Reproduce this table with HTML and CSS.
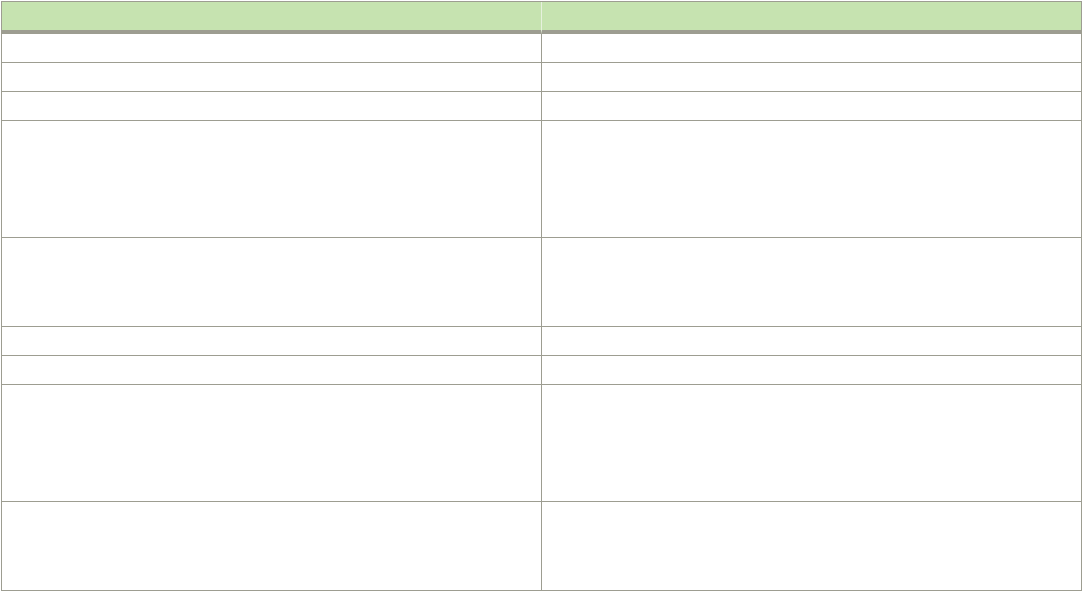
FILE: index.html
```html
<!DOCTYPE html>
<html>
<head>
<meta charset="utf-8">
<link rel="stylesheet" href="styles.css">
</head>
<body>
<div class="page">
  <div class="table">
    <div class="cell head left"></div>
    <div class="cell head"></div>
    <div class="cell left r1"></div><div class="cell r1"></div>
    <div class="cell left r1"></div><div class="cell r1"></div>
    <div class="cell left r1"></div><div class="cell r1"></div>
    <div class="cell left r4"></div><div class="cell r4"></div>
    <div class="cell left r3"></div><div class="cell r3"></div>
    <div class="cell left r1"></div><div class="cell r1"></div>
    <div class="cell left r1"></div><div class="cell r1"></div>
    <div class="cell left r4"></div><div class="cell r4"></div>
    <div class="cell left r3 last"></div><div class="cell r3 last"></div>
  </div>
</div>
</body>
</html>
```
FILE: styles.css
```css
html, body {
  margin: 0;
  padding: 0;
  background: #ffffff;
  font-family: "Liberation Sans", Arial, sans-serif;
}
.page {
  padding: 1px 0 0 1px;
}
.table {
  width: 1079px;
  display: grid;
  grid-template-columns: 540px 539px;
  border-top: 1px solid #9d9d91;
  border-left: 1px solid #9d9d91;
  border-right: 1px solid #9d9d91;
}
.cell {
  border-bottom: 1px solid #9d9d91;
}
.cell.left {
  border-right: 1px solid #9d9d91;
}
.head {
  height: 28px;
  background: #c6e3b0;
  border-bottom: 4px solid #9d9d91;
}
.head.left {
  border-right: 1px solid #e6f1dd;
}
.r1 { height: 28px; }
.r3 { height: 88px; }
.r4 { height: 116px; }
```
